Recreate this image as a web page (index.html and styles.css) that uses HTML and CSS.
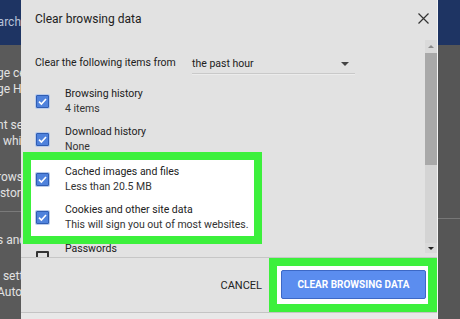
FILE: index.html
```html
<!DOCTYPE html>
<html lang="en">
<head>
  <meta charset="UTF-8">
  <meta name="viewport" content="width=device-width, initial-scale=1">
  <title>Clear browsing data</title>
  <link rel="stylesheet" href="styles.css">
</head>
<body>

<div class="page">
  <!-- settings page behind the dialog, left edge -->
  <aside class="side side-left">
    <div class="topbar"><span>Search</span></div>
    <div class="side-group">
      <p>ge certificates</p>
      <p>ge HTTPS/SSL</p>
    </div>
    <div class="side-group">
      <p>nt settings</p>
      <p>l which</p>
    </div>
    <div class="side-group side-rule">
      <p>rowsing data</p>
      <p>istory, cookies</p>
    </div>
    <div class="side-group">
      <p>s and forms</p>
    </div>
    <div class="side-group">
      <p>l settings</p>
      <p>Autofill</p>
    </div>
  </aside>

  <section class="dialog">
    <header class="dialog-head">
      <h1>Clear browsing data</h1>
      <span class="close">
        <svg width="11" height="11" viewBox="0 0 11 11"><path d="M0.5 0.5 L10.5 10.5 M10.5 0.5 L0.5 10.5" stroke="#333" stroke-width="1.2" fill="none"/></svg>
      </span>
    </header>

    <div class="dialog-body">
      <div class="items">
        <div class="range">
          <span class="range-label">Clear the following items from</span>
          <div class="select">
            <span>the past hour</span>
            <i class="caret"></i>
          </div>
        </div>

        <div class="item">
          <span class="check on"></span>
          <div class="item-text">
            <div class="item-title">Browsing history</div>
            <div class="item-sub">4 items</div>
          </div>
        </div>
        <div class="item">
          <span class="check on"></span>
          <div class="item-text">
            <div class="item-title">Download history</div>
            <div class="item-sub">None</div>
          </div>
        </div>

        <div class="highlight">
          <div class="item">
            <span class="check on"></span>
            <div class="item-text">
              <div class="item-title">Cached images and files</div>
              <div class="item-sub">Less than 20.5 MB</div>
            </div>
          </div>
          <div class="item">
            <span class="check on"></span>
            <div class="item-text">
              <div class="item-title">Cookies and other site data</div>
              <div class="item-sub">This will sign you out of most websites.</div>
            </div>
          </div>
        </div>

        <div class="item item-cut">
          <span class="check"></span>
          <div class="item-text">
            <div class="item-title">Passwords</div>
          </div>
        </div>
      </div>

      <div class="scrollbar">
        <div class="sb-btn sb-up"><i></i></div>
        <div class="sb-thumb"></div>
        <div class="sb-track"></div>
        <div class="sb-btn sb-down"><i></i></div>
      </div>
    </div>

    <footer class="dialog-foot">
      <span class="cancel">CANCEL</span>
      <div class="highlight-btn">
        <button class="primary">CLEAR BROWSING DATA</button>
      </div>
    </footer>
    <div class="dialog-end"></div>
  </section>

  <aside class="side side-right">
    <div class="topbar"></div>
    <div class="side-block"></div>
  </aside>
</div>

</body>
</html>
```

FILE: styles.css
```css
body {
  margin: 0;
  font-family: Roboto, "Liberation Sans", sans-serif;
  background: #5a5a5a;
}

.page {
  display: flex;
  height: 319px;
  overflow: hidden;
}

/* page behind the dialog */
.side {
  background: #5a5a5a;
  overflow: hidden;
}

.side-left {
  width: 21px;
}

.side-right {
  flex: 1;
  background: #565656;
}

.topbar {
  height: 45px;
  background: #1e3463;
  color: #b9c3d8;
  font-size: 12px;
  line-height: 45px;
  display: flex;
  justify-content: flex-end;
  white-space: nowrap;
}

.side-group {
  margin-top: 20px;
  color: #e2e2e2;
  font-size: 12px;
  white-space: nowrap;
  text-indent: -3px;
}

.side-group:first-of-type {
  margin-top: 25px;
}

.side-group p {
  margin: 0;
  line-height: 16px;
}

.side-rule {
  padding-bottom: 10px;
  border-bottom: 1px solid #7a7a7a;
}

.side-block {
  height: 173px;
  border-bottom: 1px solid #777;
}

/* dialog */
.dialog {
  width: 417px;
  flex-shrink: 0;
  background: #e2e2e2;
  border-right: 1px solid #f4f4f4;
  box-sizing: border-box;
  display: flex;
  flex-direction: column;
  color: #212121;
}

.dialog-head {
  height: 40px;
  display: flex;
  align-items: center;
  justify-content: space-between;
  padding: 0 8px 0 14px;
}

.dialog-head h1 {
  margin: 0 0 2px;
  font-size: 12px;
  font-weight: normal;
}

.close {
  display: flex;
  margin-bottom: 3px;
}

.dialog-body {
  height: 217px;
  display: flex;
  align-items: flex-start;
  overflow: hidden;
}

.items {
  flex: 1;
  padding-top: 14px;
  font-size: 10.5px;
  white-space: nowrap;
}

.range {
  display: flex;
  align-items: flex-end;
  height: 20px;
  padding-left: 14px;
}

.range-label {
  width: 157px;
  line-height: 22px;
}

.select {
  width: 163px;
  height: 19px;
  display: flex;
  align-items: center;
  justify-content: space-between;
  border-bottom: 1px solid #c9c9c9;
  box-shadow: 0 1px 0 #ececec;
}

.caret {
  width: 0;
  height: 0;
  border-left: 4px solid transparent;
  border-right: 4px solid transparent;
  border-top: 4px solid #444;
  margin-right: 6px;
}

.item {
  display: flex;
  align-items: center;
  gap: 16px;
  padding-left: 15px;
  margin-top: 8px;
}

.range + .item {
  margin-top: 12px;
}

.item-text {
  line-height: 15px;
}

.item-sub {
  color: #333;
}

.check {
  width: 13px;
  height: 13px;
  box-sizing: border-box;
  border: 2px solid #333;
  border-radius: 1px;
  flex-shrink: 0;
}

.check.on {
  border: 1px solid #2f5db3;
  background: #4f82dc url("data:image/svg+xml;utf8,<svg xmlns='http://www.w3.org/2000/svg' width='11' height='11' viewBox='0 0 11 11'><path d='M2 5.6 L4.4 8 L9 3' stroke='white' stroke-width='1.6' fill='none'/></svg>") center no-repeat;
  box-shadow: 0 0 0 1px #b9cbea;
}

.highlight {
  width: 239px;
  margin: -2px 0 0 2px;
  border: 8px solid #3cf03c;
  background: #fff;
  padding: 4px 0 4px 5px;
  box-sizing: border-box;
}

.highlight .item {
  padding-left: 0;
  margin-top: 8px;
}

.highlight .item:first-child {
  margin-top: 0;
}

.item-cut {
  margin-top: -3px;
  align-items: flex-start;
}

.item-cut .check {
  margin-top: 10px;
}

/* scrollbar */
.scrollbar {
  width: 12px;
  height: 213px;
  display: flex;
  flex-direction: column;
  background: #d4d4d4;
}

.sb-btn {
  display: flex;
  align-items: center;
  justify-content: center;
  background: #dadada;
}

.sb-up {
  height: 13px;
}

.sb-down {
  height: 10px;
}

.sb-up i {
  border-left: 3px solid transparent;
  border-right: 3px solid transparent;
  border-bottom: 3px solid #8a8a8a;
}

.sb-down i {
  border-left: 3px solid transparent;
  border-right: 3px solid transparent;
  border-top: 3px solid #222;
}

.sb-thumb {
  height: 112px;
  background: #a9a9a9;
}

.sb-track {
  flex: 1;
}

/* footer */
.dialog-foot {
  height: 54px;
  border-top: 1px solid #c6c6c6;
  display: flex;
  align-items: center;
  justify-content: flex-end;
}

.cancel {
  font-size: 11px;
  color: #222;
  margin-right: 7px;
}

.highlight-btn {
  align-self: stretch;
  border: 8px solid #3cf03c;
  border-right-width: 9px;
  background: #fff;
  padding: 4px 2px 5px 4px;
  display: flex;
}

.primary {
  width: 145px;
  height: 29px;
  background: #5b8def;
  border: 1px solid #3c68c6;
  border-radius: 2px;
  color: white;
  font-family: Roboto, "Liberation Sans", sans-serif;
  font-size: 10px;
  font-weight: bold;
  padding: 0;
}

.dialog-end {
  flex: 1;
  border-top: 1px solid #c4c4c4;
  background: #e8e8e8;
}
```
